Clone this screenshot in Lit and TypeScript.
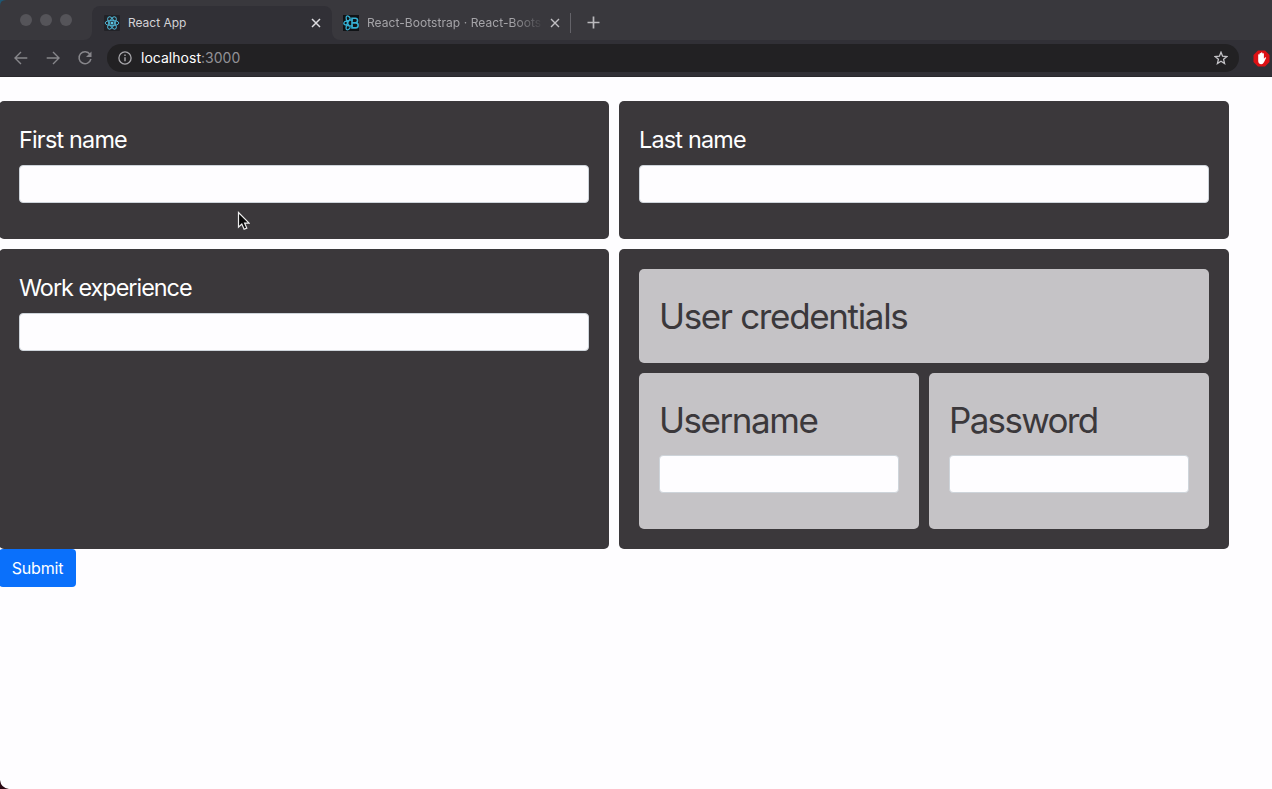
import { LitElement, html, css, svg } from "lit";
import { customElement, property } from "lit/decorators.js";

const reactAtom = svg`
  <g fill="none" stroke="#4fb3d0" stroke-width="1">
    <ellipse cx="8" cy="8" rx="6.8" ry="2.7"></ellipse>
    <ellipse cx="8" cy="8" rx="6.8" ry="2.7" transform="rotate(60 8 8)"></ellipse>
    <ellipse cx="8" cy="8" rx="6.8" ry="2.7" transform="rotate(120 8 8)"></ellipse>
  </g>
  <circle cx="8" cy="8" r="1.5" fill="#5cc4e2"></circle>`;

@customElement("browser-chrome")
export class BrowserChrome extends LitElement {
  static styles = css`
    :host { display: block; height: 77px; background: #313036; font-family: Inter, sans-serif; }
    svg { display: block; flex: none; }
    .strip { display: flex; height: 40px; background: #39383d; }
    .lights { display: flex; gap: 8px; padding: 14px 0 0 20px; width: 72px; box-sizing: border-box; }
    .light { width: 12px; height: 12px; border-radius: 50%; background: #555459; flex: none; }
    .lead { width: 20px; background: #313036; }
    .lead::before { content: ""; display: block; height: 40px; background: #39383d; border-radius: 0 0 8px 0; }
    .tab { margin-top: 6px; height: 34px; box-sizing: border-box; display: flex; align-items: center; font-size: 12px; }
    .active { width: 240px; background: #313036; border-radius: 8px 8px 0 0; padding-left: 12px; color: #d3d2d6; }
    .rest { display: flex; flex: 1; background: #39383d; border-radius: 0 0 0 8px; }
    .under { flex: 1; display: flex; background: linear-gradient(to top, #313036 9px, #39383d 9px); }
    .title { margin-left: 8px; width: 174px; white-space: nowrap; overflow: hidden; line-height: 18px; }
    .t1 { letter-spacing: -0.02px; }
    .t2 { letter-spacing: 0.06px; color: #a5a4a8; -webkit-mask-image: linear-gradient(to right, #000 145px, transparent 177px); mask-image: linear-gradient(to right, #000 145px, transparent 177px); }
    .other { padding-left: 11px; }
    .close { margin-left: 8px; }
    .divider { width: 1px; height: 20px; margin: 13px 0 0 9px; background: #646369; }
    .plus { margin: 16px 0 0 15.5px; }
    .bar { height: 36px; display: flex; align-items: center; padding-left: 13px; border-bottom: 1px solid #29282c; }
    .nav { display: flex; gap: 16px; }
    .omni { margin-left: 14px; width: 1132px; height: 28px; border-radius: 14px; background: #222123; display: flex; align-items: center; padding: 0 11px; box-sizing: border-box; }
    .url { flex: 1; margin-left: 9px; font-size: 14px; letter-spacing: 0.02px; color: #929196; line-height: 20px; }
    .host { color: #fff; }
    .block { margin-left: 13.5px; }
  `;

  render() {
    return html`
      <div class="strip">
        <div class="lights"><i class="light"></i><i class="light"></i><i class="light"></i></div>
        <div class="lead"></div>
        <div class="tab active">
          <svg width="16" height="16" viewBox="0 0 16 16"><rect width="16" height="16" rx="1" fill="#222227"></rect>${reactAtom}</svg>
          <div class="title t1">React App</div>
          <svg class="close" width="12" height="12" viewBox="0 0 12 12"><path d="M2 2l8 8M10 2l-8 8" stroke="#dedde1" stroke-width="1.5"></path></svg>
        </div>
        <div class="under">
          <div class="rest">
            <div class="tab other">
              <svg width="16" height="16" viewBox="0 0 16 16">
                <rect width="16" height="16" fill="#101316"></rect>
                <g fill="none" stroke="#36b0d3" stroke-width="1.3">
                  <path d="M10 5.2C6 4.6 1 6 .8 8s5 3.500 9.200 2.800M7.500 3.800C6.400 1.500 4.700.500 3.700 1.200 2.300 2.300 3.800 8 7 12M7.500 12.200c-1.300 2.300-3 3.100-3.900 2.400C2.200 13.500 3.900 7.700 7.200 4"></path>
                  <path d="M9 3.200h3.300c3 0 3 4.400.2 4.700H9zM9 7.900h3.800c3.200.100 3.100 5-.2 5H9z" stroke-width="1.600"></path>
                </g>
              </svg>
              <div class="title t2">React-Bootstrap · React-Boots</div>
              <svg class="close" width="12" height="12" viewBox="0 0 12 12"><path d="M2 2l8 8M10 2l-8 8" stroke="#c0bfc3" stroke-width="1.400"></path></svg>
            </div>
            <div class="divider"></div>
            <svg class="plus" width="13" height="13" viewBox="0 0 13 13"><path d="M6.500.500v12M.500 6.500h12" stroke="#bab9bd" stroke-width="1.700"></path></svg>
          </div>
        </div>
      </div>
      <div class="bar">
        <div class="nav">
          <svg width="16" height="16" viewBox="0 0 16 16"><path d="M14.300 8H2.300M8 2L2 8l6 6" fill="none" stroke="#87868b" stroke-width="1.400"></path></svg>
          <svg width="16" height="16" viewBox="0 0 16 16"><path d="M1.700 8h12M8 2l6 6-6 6" fill="none" stroke="#87868b" stroke-width="1.400"></path></svg>
          <svg width="16" height="16" viewBox="0 0 16 16"><path d="M13 4.300A6 6 0 1 0 13.900 9" fill="none" stroke="#87868b" stroke-width="1.500"></path><path d="M14.500 1.500V7H9z" fill="#87868b"></path></svg>
        </div>
        <div class="omni">
          <svg width="14" height="14" viewBox="0 0 14 14"><circle cx="7" cy="7" r="6.100" fill="none" stroke="#a7a6aa" stroke-width="1.300"></circle><path d="M7 6.200v4M7 3.500v1.400" stroke="#a7a6aa" stroke-width="1.400"></path></svg>
          <div class="url"><span class="host">localhost</span>:3000</div>
          <svg width="14" height="14" viewBox="0 0 14 14"><path d="M7 1.200l1.600 4 4.300.300-3.300 2.800 1 4.200L7 10.200l-3.600 2.300 1-4.200L1.100 5.500l4.300-.300z" fill="none" stroke="#c4c3c7" stroke-width="1.300"></path></svg>
        </div>
        <svg class="block" width="17" height="17" viewBox="0 0 17 17">
          <path d="M5 .500h7L16.500 5v7L12 16.500H5L.500 12V5z" fill="#dc1014"></path>
          <path d="M5.200 8.500V4.600q.7-.8 1.400 0V3.300q.7-.8 1.400 0V2.700q.7-.7 1.400 0v.800q.8-.7 1.500.1v5.200l1.100-1.300q1-.4 1.200.3l-2.100 4.200Q10 14.200 8.300 14.200 5.200 14 5.200 11z" fill="#fff"></path>
        </svg>
      </div>`;
  }
}

@customElement("form-field")
export class FormField extends LitElement {
  @property() label = "";

  static styles = css`
    :host { display: block; }
    .label { display: block; margin-bottom: 8px; white-space: nowrap; }
    .input { display: block; width: 100%; height: 38px; box-sizing: border-box; border: 1px solid #ced4da; border-radius: 4px; background: #fefdff; padding: 6px 12px; font: 16px Inter, sans-serif; outline: none; }
  `;

  render() {
    return html`<label class="label" for="field">${this.label}</label><input class="input" id="field" />`;
  }
}

@customElement("app-root")
export class AppRoot extends LitElement {
  static styles = css`
    :host { display: block; position: relative; width: 1272px; height: 789px; overflow: hidden; background: #fefdff; font-family: Inter, sans-serif; }
    .page { padding-top: 24px; margin-left: -1px; }
    .grid { display: grid; grid-template-columns: 610px 610px; grid-template-rows: 138px 300px; gap: 10px; }
    .card { background: #3b383b; color: #fff; border-radius: 5px; padding: 20px; font-size: 23.4px; line-height: 36px; box-sizing: border-box; }
    .first, .last, .work { padding-top: 21px; }
    .first::part(none) { display: none; }
    .nested { display: grid; grid-template-columns: 280px 280px; grid-template-rows: 94px 156px; gap: 10px; }
    .inner { background: #c5c3c6; color: #3b383b; border-radius: 5px; padding: 20px; font-size: 35px; line-height: 54px; box-sizing: border-box; white-space: nowrap; }
    .wide { grid-column: 1 / 3; }
    .first, .last, .work { line-height: 35px; }
    .first { letter-spacing: -0.8px; }
    .last { letter-spacing: -0.8px; }
    .work { letter-spacing: -1px; }
    .cred { letter-spacing: -1.35px; }
    .user { letter-spacing: -1.45px; }
    .pass { letter-spacing: -1.7px; }
    .submit { display: block; width: 77px; height: 38px; border: 0; border-radius: 4px; background: #0a70fb; color: #fff; padding: 0; font: 16px/24px Inter, sans-serif; letter-spacing: -0.15px; }
    .pointer { position: absolute; left: 236.5px; top: 211px; }
    .corner { position: absolute; display: block; }
    .tl { left: 0; top: 0; }
    .bl { left: 0; bottom: 0; }
  `;

  render() {
    return html`
      <browser-chrome></browser-chrome>
      <div class="page">
        <div class="grid">
          <form-field class="card first" label="First name"></form-field>
          <form-field class="card last" label="Last name"></form-field>
          <form-field class="card work" label="Work experience"></form-field>
          <div class="card nested">
            <div class="inner wide cred">User credentials</div>
            <form-field class="inner user" label="Username"></form-field>
            <form-field class="inner pass" label="Password"></form-field>
          </div>
        </div>
        <button class="submit">Submit</button>
      </div>
      <svg class="pointer" width="13" height="20" viewBox="0 0 13 20"><path d="M1.500 1.500v14.700l3.300-3.100 2.300 5.200 2.700-1.200-2.200-5h4.500z" fill="#080808" stroke="#eee" stroke-width="1.200"></path></svg>
      <svg class="corner tl" width="6" height="6" viewBox="0 0 6 6"><path d="M0 0h6Q0 0 0 6z" fill="#1f5773"></path></svg>
      <svg class="corner bl" width="9" height="9" viewBox="0 0 9 9"><path d="M0 0Q1 8 9 9H0z" fill="#2b0a14"></path></svg>`;
  }
}
